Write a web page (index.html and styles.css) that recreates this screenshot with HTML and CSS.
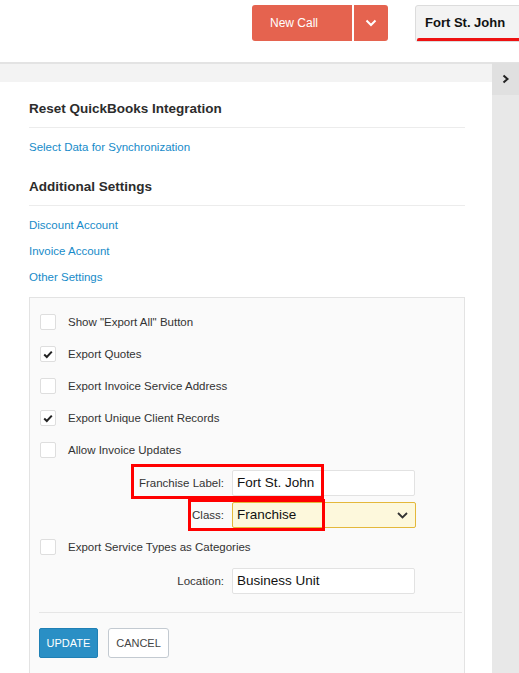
FILE: index.html
```html
<!DOCTYPE html>
<html>
<head>
<meta charset="utf-8">
<link rel="stylesheet" href="styles.css">
</head>
<body>
<header class="topbar">
  <div class="call-group">
    <button class="btn-call">New Call</button>
    <button class="btn-call-drop"><svg width="12" height="8" viewBox="0 0 12 8"><polyline points="1.5,1.5 6,6 10.5,1.5" fill="none" stroke="#fff" stroke-width="2"/></svg></button>
  </div>
  <div class="location-pick">Fort St. John</div>
</header>
<div class="main">
  <div class="content">
    <div class="band"></div>
    <div class="page">
      <h2 class="sec-title">Reset QuickBooks Integration</h2>
      <a class="link first">Select Data for Synchronization</a>
      <h2 class="sec-title second">Additional Settings</h2>
      <a class="link first">Discount Account</a>
      <a class="link">Invoice Account</a>
      <a class="link">Other Settings</a>
      <div class="panel">
        <div class="check-row"><span class="cb"></span><span>Show "Export All" Button</span></div>
        <div class="check-row"><span class="cb"><svg width="10" height="9" viewBox="0 0 10 9"><polyline points="1.2,4.5 3.8,7 8.8,1.6" fill="none" stroke="#222" stroke-width="2"/></svg></span><span>Export Quotes</span></div>
        <div class="check-row"><span class="cb"></span><span>Export Invoice Service Address</span></div>
        <div class="check-row"><span class="cb"><svg width="10" height="9" viewBox="0 0 10 9"><polyline points="1.2,4.5 3.8,7 8.8,1.6" fill="none" stroke="#222" stroke-width="2"/></svg></span><span>Export Unique Client Records</span></div>
        <div class="check-row"><span class="cb"></span><span>Allow Invoice Updates</span></div>
        <div class="field-row franchise">
          <label class="field-label">Franchise Label:</label>
          <div class="input">Fort St. John</div>
          <span class="mark mark-franchise"></span>
        </div>
        <div class="field-row classrow">
          <label class="field-label">Class:</label>
          <div class="input select">Franchise<svg class="caret" width="11" height="7" viewBox="0 0 11 7"><polyline points="1,1 5.5,5.5 10,1" fill="none" stroke="#333" stroke-width="1.8"/></svg></div>
          <span class="mark mark-class"></span>
        </div>
        <div class="check-row after-class"><span class="cb"></span><span>Export Service Types as Categories</span></div>
        <div class="field-row locrow">
          <label class="field-label">Location:</label>
          <div class="input">Business Unit</div>
        </div>
        <div class="actions">
          <button class="btn-update">UPDATE</button>
          <button class="btn-cancel">CANCEL</button>
        </div>
      </div>
    </div>
  </div>
  <aside class="sidebar">
    <div class="toggle"><svg width="8" height="10" viewBox="0 0 8 10"><polyline points="1.5,1.5 5.5,5 1.5,8.5" fill="none" stroke="#222" stroke-width="2"/></svg></div>
  </aside>
</div>
</body>
</html>
```
FILE: styles.css
```css
* { box-sizing: border-box; }
html, body { margin: 0; padding: 0; }
body {
  width: 519px;
  height: 673px;
  overflow: hidden;
  font-family: "Liberation Sans", Arial, sans-serif;
  color: #333;
  background: #fff;
}
.topbar {
  height: 64px;
  border-bottom: 2px solid #e3e3e3;
  display: flex;
  align-items: flex-start;
  padding-left: 252px;
}
.call-group {
  display: flex;
  gap: 2px;
  margin-top: 5px;
}
.btn-call {
  width: 100px;
  height: 36px;
  border: none;
  border-radius: 3px 0 0 3px;
  background: #e5634f;
  color: #fff;
  font-family: "Liberation Sans", Arial, sans-serif;
  font-size: 12px;
  text-align: left;
  padding-left: 18px;
}
.btn-call-drop {
  width: 34px;
  height: 36px;
  border: none;
  border-radius: 0 3px 3px 0;
  background: #e5634f;
  display: flex;
  align-items: center;
  justify-content: center;
  padding: 0;
}
.location-pick {
  margin-left: 27px;
  margin-top: 5px;
  width: 120px;
  height: 37px;
  background: #f3f3f3;
  border: 1px solid #dcdcdc;
  border-radius: 3px;
  padding: 0 0 0 9px;
  font-size: 13px;
  font-weight: bold;
  color: #111;
  line-height: 33px;
  position: relative;
  flex-shrink: 0;
}
.location-pick::after {
  content: "";
  position: absolute;
  left: 1px;
  right: 0;
  bottom: 0;
  height: 3px;
  background: #ee1111;
  border-radius: 2px 0 0 0;
}
.main {
  display: flex;
  height: 609px;
}
.content {
  flex: 1;
  display: flex;
  flex-direction: column;
}
.band {
  height: 18px;
  background: #f3f3f3;
}
.page {
  flex: 1;
  padding: 0 27px 0 29px;
  display: flex;
  flex-direction: column;
  align-items: flex-start;
}
.sec-title {
  align-self: stretch;
  margin: 18px 0 0 0;
  font-size: 13.5px;
  font-weight: bold;
  color: #2c2c2c;
  line-height: 18px;
  padding-bottom: 9px;
  border-bottom: 1px solid #ececec;
}
.sec-title.second { margin-top: 23px; }
.link {
  display: block;
  font-size: 11.5px;
  color: #178bc9;
  line-height: 16px;
  margin-top: 10px;
}
.link.first { margin-top: 11px; }
.panel {
  align-self: stretch;
  margin-top: 12px;
  flex: 1;
  background: #fafafa;
  border: 1px solid #e3e3e3;
  border-bottom: none;
  padding: 8px 2px 0 10px;
}
.check-row {
  display: flex;
  align-items: center;
  gap: 12px;
  height: 32px;
  font-size: 11.5px;
  color: #333;
}
.check-row.after-class { margin-top: 3px; }
.cb {
  width: 16px;
  height: 16px;
  background: #fff;
  border: 1px solid #dedede;
  border-radius: 2px;
  display: flex;
  align-items: center;
  justify-content: center;
}
.field-row {
  display: flex;
  align-items: center;
  position: relative;
  height: 26px;
}
.franchise { margin-top: 4px; }
.classrow { margin-top: 6px; }
.locrow { margin-top: 5px; }
.field-label {
  width: 192px;
  text-align: right;
  font-size: 11.5px;
  color: #333;
  padding-right: 8px;
  flex-shrink: 0;
}
.input {
  width: 183px;
  height: 26px;
  background: #fff;
  border: 1px solid #e2e2e2;
  border-radius: 2px;
  font-size: 13.5px;
  color: #111;
  padding-left: 4px;
  line-height: 24px;
}
.select {
  width: 184px;
  background: #fdf8dc;
  border-color: #e4b83a;
  display: flex;
  align-items: center;
  justify-content: space-between;
  padding-right: 7px;
}
.mark {
  position: absolute;
  border: 3px solid #f00;
  pointer-events: none;
}
.mark-franchise { left: 91px; top: -6px; width: 193px; height: 35px; }
.mark-class { left: 148px; top: -3px; width: 137px; height: 32px; }
.actions {
  margin-top: 18px;
  border-top: 1px solid #e6e6e6;
  padding-top: 15px;
  display: flex;
  gap: 10px;
  margin-left: -1px;
}
.btn-update {
  width: 59px;
  height: 30px;
  background: #2a8fc5;
  border: 1px solid #1f80b5;
  border-radius: 2px;
  color: #fff;
  font-family: "Liberation Sans", Arial, sans-serif;
  font-size: 11px;
  padding: 0;
}
.btn-cancel {
  width: 61px;
  height: 30px;
  background: #fff;
  border: 1px solid #c3cad1;
  border-radius: 3px;
  color: #444;
  font-family: "Liberation Sans", Arial, sans-serif;
  font-size: 11px;
  padding: 0;
}
.sidebar {
  width: 27px;
  background: #e8e8e8;
  margin-top: -1px;
}
.toggle {
  height: 32px;
  background: #e0e0e0;
  display: flex;
  align-items: center;
  justify-content: center;
}
```
